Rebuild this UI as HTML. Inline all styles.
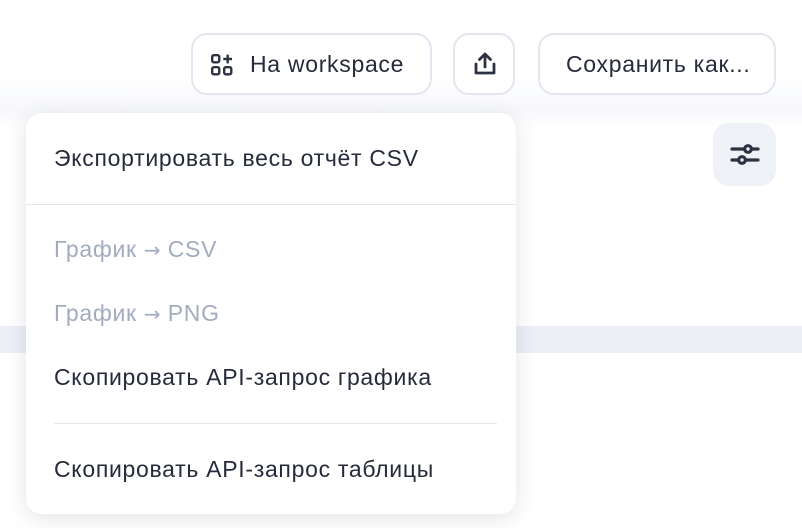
<!DOCTYPE html>
<html><head><meta charset="utf-8"><style>
body{margin:0;width:802px;height:528px;background:#fff;position:relative;overflow:hidden;font-family:"Liberation Sans",sans-serif;color:#262b3a}
.btn{position:absolute;box-sizing:border-box;border:2px solid #e3e6ee;border-radius:16px;background:#fff;display:flex;align-items:center;font-size:23px;letter-spacing:0.7px}
.band{position:absolute;left:0;top:326px;width:802px;height:27px;background:#eceff5}
.menu{position:absolute;left:26px;top:113px;width:490px;height:401px;background:#fff;border-radius:16px;box-shadow:0 4px 22px rgba(30,40,70,.13)}
.it{position:absolute;left:28px;font-size:23px;letter-spacing:0.7px;white-space:nowrap}
.g{color:#a3abbe}
.hr{position:absolute;height:1px;background:#e3e6ee}
.ar{font-family:"DejaVu Sans",sans-serif;font-size:20px;letter-spacing:0}
</style></head><body>
<div style="position:absolute;left:0;top:0;width:802px;height:130px;background:linear-gradient(#fff 55%,#f7f8fb 85%,#fff)"></div>
<div class="btn" style="left:191px;top:33px;width:241px;height:62px">
<svg style="position:absolute;left:17px;top:18px" width="24" height="24" viewBox="0 0 22 22" fill="none" stroke="#2d3242" stroke-width="2.2"><rect x="2" y="2" width="6.5" height="6.5" rx="1.5"/><rect x="2" y="13" width="6.5" height="6.5" rx="1.5"/><rect x="13" y="13" width="6.5" height="6.5" rx="1.5"/><path d="M16.2 1.5v8M12.2 5.5h8"/></svg>
<span style="position:absolute;left:57px;top:16px">На workspace</span></div>
<div class="btn" style="left:453px;top:33px;width:62px;height:62px">
<svg style="position:absolute;left:18px;top:16px" width="24" height="26" viewBox="0 0 24 26" fill="none" stroke="#2d3242" stroke-width="2.8" stroke-linecap="round" stroke-linejoin="round"><path d="M12 16V3M6.5 8.5L12 3l5.5 5.5M3 13v9h18v-9"/></svg></div>
<div class="btn" style="left:538px;top:33px;width:238px;height:62px"><span style="position:absolute;left:26px;top:16px">Сохранить как...</span></div>
<div style="position:absolute;left:713px;top:123px;width:63px;height:63px;border-radius:16px;background:#eef1f6">
<svg style="position:absolute;left:17px;top:18px" width="30" height="28" viewBox="0 0 30 28" fill="none" stroke="#2d3242" stroke-width="3.2" stroke-linecap="round"><path d="M2 8h12M22 8h6M2 19h6M16 19h12"/><circle cx="18" cy="8" r="3.3"/><circle cx="12" cy="19" r="3.3"/></svg></div>
<div class="band"></div>
<div class="menu">
<div class="it" style="top:32px">Экспортировать весь отчёт CSV</div>
<div class="hr" style="left:0;width:490px;top:91px"></div>
<div class="it g" style="top:123px">График <span class="ar">→</span> CSV</div>
<div class="it g" style="top:187px">График <span class="ar">→</span> PNG</div>
<div class="it" style="top:251px">Скопировать API-запрос графика</div>
<div class="hr" style="left:28px;width:443px;top:310px"></div>
<div class="it" style="top:343px">Скопировать API-запрос таблицы</div>
</div>
</body></html>
